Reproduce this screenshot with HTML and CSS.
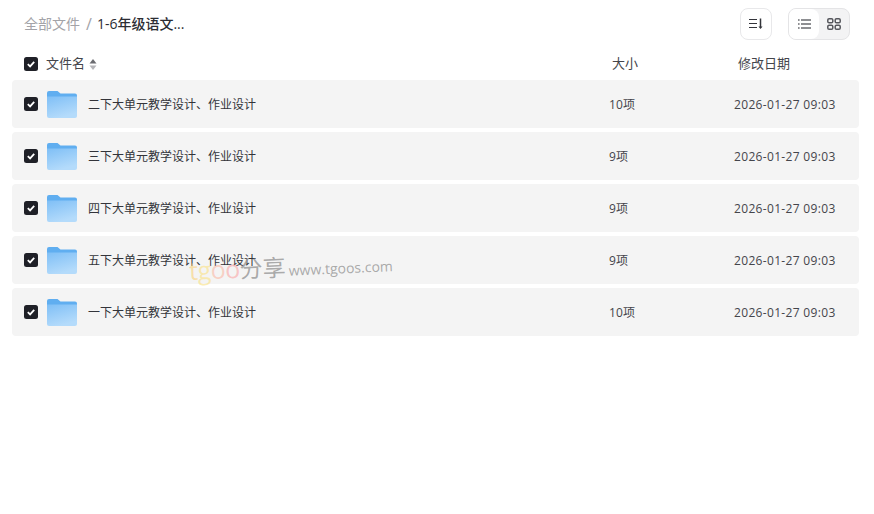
FILE: index.html
```html
<!DOCTYPE html>
<html lang="zh">
<head>
  <meta charset="UTF-8"/>
  <title>全部文件</title>
  <link rel="stylesheet" href="styles.css">
</head>
<body>
  <svg class="defs">
    <defs>
      <linearGradient id="folderGrad" x1="0" y1="0" x2="0.4" y2="1">
        <stop offset="0" stop-color="#7fbff6"/>
        <stop offset="1" stop-color="#b4dbfb"/>
      </linearGradient>
      <symbol id="folder" viewBox="0 0 30 27">
        <path d="M0 2a2 2 0 0 1 2-2h8.500l3 2.500H28a2 2 0 0 1 2 2V8H0z" fill="#60aef0"/>
        <path d="M0 5.500h30V25a2 2 0 0 1-2 2H2a2 2 0 0 1-2-2z" fill="url(#folderGrad)"/>
      </symbol>
      <symbol id="check" viewBox="0 0 14 14">
        <rect width="14" height="14" rx="2.500" fill="#1f2027"/>
        <path d="M3.800 7.200l2.300 2.200 4.100-4.500" fill="none" stroke="#fff" stroke-width="1.800"/>
      </symbol>
    </defs>
  </svg>

  <div class="top">
    <div class="crumbs">
      <span class="crumb-root">全部文件</span>
      <span class="crumb-sep">/</span>
      <span class="crumb-now">1-6年级语文...</span>
    </div>
    <div class="tools">
      <div class="btn-sort">
        <svg width="14" height="12" viewBox="0 0 14 12"><path d="M0 1.500h8M0 5.500h8M0 9.500h8" stroke="#33343a" stroke-width="1.200"/><path d="M11.500 0.500v9" stroke="#33343a" stroke-width="1.500"/><path d="M9.500 8.500h4l-2 2.500z" fill="#33343a"/></svg>
      </div>
      <div class="view-switch">
        <div class="view-item active">
          <svg width="13" height="10" viewBox="0 0 13 10"><path d="M3 1h10M3 5h10M3 9h10" stroke="#1f2027" stroke-width="1.100"/><path d="M0 1h1.600M0 5h1.600M0 9h1.600" stroke="#1f2027" stroke-width="1.100"/></svg>
        </div>
        <div class="view-item">
          <svg width="14" height="12" viewBox="0 0 14 12"><g fill="none" stroke="#55565c" stroke-width="1.500"><rect x="0.800" y="0.800" width="5" height="4" rx="1.300"/><rect x="8.200" y="0.800" width="5" height="4" rx="1.300"/><rect x="0.800" y="7.200" width="5" height="4" rx="1.300"/><rect x="8.200" y="7.200" width="5" height="4" rx="1.300"/></g></svg>
        </div>
      </div>
    </div>
  </div>

  <div class="head">
    <svg class="check"><use href="#check"/></svg>
    <div class="head-name"><span>文件名</span>
      <svg class="sort-caret" width="8" height="11" viewBox="0 0 8 11"><path d="M4 0l3.500 4.500H.5z" fill="#6a6b70"/><path d="M4 11L.5 6.500h7z" fill="#b4b4b8"/></svg>
    </div>
    <div class="head-size">大小</div>
    <div class="head-date">修改日期</div>
  </div>

  <div class="list">
    <div class="row">
      <svg class="check"><use href="#check"/></svg>
      <svg class="folder"><use href="#folder"/></svg>
      <div class="name">二下大单元教学设计、作业设计</div>
      <div class="size">10项</div>
      <div class="date">2026-01-27 09:03</div>
    </div>
    <div class="row">
      <svg class="check"><use href="#check"/></svg>
      <svg class="folder"><use href="#folder"/></svg>
      <div class="name">三下大单元教学设计、作业设计</div>
      <div class="size">9项</div>
      <div class="date">2026-01-27 09:03</div>
    </div>
    <div class="row">
      <svg class="check"><use href="#check"/></svg>
      <svg class="folder"><use href="#folder"/></svg>
      <div class="name">四下大单元教学设计、作业设计</div>
      <div class="size">9项</div>
      <div class="date">2026-01-27 09:03</div>
    </div>
    <div class="row">
      <svg class="check"><use href="#check"/></svg>
      <svg class="folder"><use href="#folder"/></svg>
      <div class="name">五下大单元教学设计、作业设计</div>
      <div class="size">9项</div>
      <div class="date">2026-01-27 09:03</div>
    </div>
    <div class="row">
      <svg class="check"><use href="#check"/></svg>
      <svg class="folder"><use href="#folder"/></svg>
      <div class="name">一下大单元教学设计、作业设计</div>
      <div class="size">10项</div>
      <div class="date">2026-01-27 09:03</div>
    </div>
  </div>

  <div class="mark"><span class="mark-t">t</span><span class="mark-g">g</span><span class="mark-o1">o</span><span class="mark-o2">o</span><span class="mark-cn">分享</span><span class="mark-url">www.tgoos.com</span></div>
</body>
</html>
```

FILE: styles.css
```css
*{
  box-sizing: border-box;
  font-family: "Open Sans", "Noto Sans CJK SC", sans-serif;
}

body{
  margin: 0;
  width: 874px;
  height: 514px;
  position: relative;
  overflow: hidden;
  background-color: #fff;
  color: #33343a;
}

.defs{
  position: absolute;
  width: 0;
  height: 0;
}

.top{
  display: flex;
  justify-content: space-between;
  align-items: center;
  height: 48px;
  padding: 0 24px;
}

.crumbs{
  display: flex;
  align-items: center;
  font-size: 14px;
  line-height: 18px;
}

.crumb-root{
  color: #a3a3a8;
}

.crumb-sep{
  color: #a3a3a8;
  margin: 0 6px;
  font-size: 16px;
}

.crumb-now{
  color: #2c2d33;
  font-weight: 500;
  font-size: 14px;
  margin-left: -1px;
}

.tools{
  display: flex;
  gap: 16px;
}

.btn-sort{
  width: 32px;
  height: 32px;
  border: 1px solid #e8e8ea;
  border-radius: 8px;
  display: flex;
  align-items: center;
  justify-content: center;
}

.view-switch{
  display: flex;
  width: 62px;
  height: 32px;
  border: 1px solid #e4e4e6;
  border-radius: 8px;
  background-color: #f3f3f4;
  overflow: hidden;
}

.view-item{
  flex: 1;
  display: flex;
  align-items: center;
  justify-content: center;
}

.view-item.active{
  background-color: #fff;
  border-radius: 0 8px 8px 0;
}

.head{
  display: flex;
  align-items: center;
  height: 32px;
  padding-left: 24px;
  font-size: 13px;
  color: #44454b;
}

.check{
  width: 14px;
  height: 14px;
  flex: none;
}

.head-name{
  display: flex;
  align-items: center;
  gap: 4px;
  margin-left: 8px;
  width: 566px;
}

.head-name span, .head-size, .head-date{
  line-height: 18px;
  padding-bottom: 2px;
}

.head-size{
  width: 126px;
}

.list{
  display: flex;
  flex-direction: column;
  gap: 4px;
  margin-left: 12px;
  width: 847px;
}

.row{
  display: flex;
  align-items: center;
  height: 48px;
  padding-left: 12px;
  background-color: #f4f4f4;
  border-radius: 4px;
  font-size: 12px;
  color: #44454b;
}

.folder{
  width: 30px;
  height: 27px;
  margin-left: 9px;
  flex: none;
}

.name{
  margin-left: 11px;
  width: 521px;
  color: #33343a;
}

.size{
  width: 125px;
  letter-spacing: 0.100px;
}

.date{
  letter-spacing: 0.330px;
}

.mark{
  position: absolute;
  left: 190px;
  top: 254px;
  display: flex;
  align-items: baseline;
  transform: rotate(-2.500deg);
  transform-origin: left bottom;
  font-size: 25px;
  letter-spacing: -0.500px;
  line-height: 32px;
  white-space: nowrap;
}

.mark-t{
  color: rgba(250, 210, 120, 0.6);
}

.mark-g{
  color: rgba(250, 225, 130, 0.6);
}

.mark-o1{
  color: rgba(250, 185, 165, 0.6);
}

.mark-o2{
  color: rgba(250, 165, 165, 0.6);
}

.mark-cn{
  color: rgba(150, 150, 150, 0.8);
  font-size: 23px;
  letter-spacing: 0;
}

.mark-url{
  color: rgba(150, 150, 150, 0.8);
  font-size: 14px;
  letter-spacing: 0;
  margin-left: 3px;
}
```
